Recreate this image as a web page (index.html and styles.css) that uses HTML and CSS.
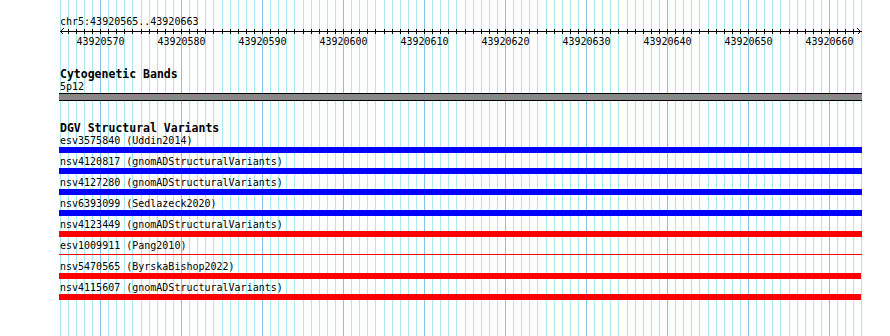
FILE: index.html
```html
<!DOCTYPE html>
<html lang="en">
<head>
    <meta charset="UTF-8">
    <title>chr5:43920565-43920663</title>
    <link rel="stylesheet" href="styles.css">
</head>
<body>
    <div class="browser">
        <!-- base guidelines, filled in by the script below -->
        <svg class="guides" id="guides" width="890" height="336"></svg>

        <div class="tracks">
            <div class="position">chr5:43920565..43920663</div>
            <svg class="ruler" id="ruler" width="890" height="20">
                <line class="axis" x1="59.5" y1="3.5" x2="861.5" y2="3.5" />
                <polyline class="arrow" points="63.5,0.5 60.5,3.5 63.5,6.5" />
                <polyline class="arrow" points="857.5,0.5 860.5,3.5 857.5,6.5" />
            </svg>

            <!-- Cytogenetic Bands -->
            <section class="track cyto">
                <div class="track-title">Cytogenetic Bands</div>
                <div class="item-label">5p12</div>
                <div class="band"></div>
            </section>

            <!-- DGV Structural Variants -->
            <section class="track dgv">
                <div class="track-title">DGV Structural Variants</div>
                <div class="variants">
                    <div class="variant">
                        <div class="item-label">esv3575840 (Uddin2014)</div>
                        <div class="bar gain"></div>
                    </div>
                    <div class="variant">
                        <div class="item-label">nsv4120817 (gnomADStructuralVariants)</div>
                        <div class="bar gain"></div>
                    </div>
                    <div class="variant">
                        <div class="item-label">nsv4127280 (gnomADStructuralVariants)</div>
                        <div class="bar gain"></div>
                    </div>
                    <div class="variant">
                        <div class="item-label">nsv6393099 (Sedlazeck2020)</div>
                        <div class="bar gain"></div>
                    </div>
                    <div class="variant">
                        <div class="item-label">nsv4123449 (gnomADStructuralVariants)</div>
                        <div class="bar loss"></div>
                    </div>
                    <div class="variant">
                        <div class="item-label">esv1009911 (Pang2010)</div>
                        <div class="bar loss thin"></div>
                    </div>
                    <div class="variant">
                        <div class="item-label">nsv5470565 (ByrskaBishop2022)</div>
                        <div class="bar loss short"></div>
                    </div>
                    <div class="variant">
                        <div class="item-label">nsv4115607 (gnomADStructuralVariants)</div>
                        <div class="bar loss short"></div>
                    </div>
                </div>
            </section>
        </div>
    </div>

    <script>
        const NS = 'http://www.w3.org/2000/svg';
        const guides = document.getElementById('guides');
        const ruler = document.getElementById('ruler');
        const start = 43920565;
        const bases = 99;
        const left = 60;
        const step = 8.1;

        function xAt(k) {
            return Math.floor(left + step * k) + 0.5;
        }

        function add(svg, tag, attrs, text) {
            const el = document.createElementNS(NS, tag);
            Object.entries(attrs).forEach(([key, value]) => el.setAttribute(key, value));
            if (text) el.textContent = text;
            svg.appendChild(el);
        }

        for (let k = 0; k <= bases; k++) {
            const x = xAt(k);
            const major = (start + k) % 10 === 0;
            // one guideline per base, darker every ten
            add(guides, 'line', { x1: x, y1: 0, x2: x, y2: 336, class: major ? 'major' : '' });
            if (k > 0 && k < bases) {
                add(ruler, 'line', { x1: x, y1: 1, x2: x, y2: 6, class: 'tick' });
            }
            if (major) {
                add(ruler, 'text', { x: x, y: 17, class: 'label' }, String(start + k));
            }
        }
    </script>
</body>
</html>
```

FILE: styles.css
```css
body {
    margin: 0;
    background-color: #fff;
}
.browser {
    display: grid;
    width: 890px;
    height: 336px;
    overflow: hidden;
}
.guides, .tracks {
    grid-area: 1 / 1;
}
.guides {
    display: block;
}
.guides line {
    stroke: #a8e8f0;
    stroke-width: 1;
    shape-rendering: crispEdges;
}
.guides line.major {
    stroke: #80c4e8;
}
.tracks {
    font-family: "DejaVu Sans Mono", "Liberation Mono", monospace;
    font-size: 10px;
    line-height: 12px;
    color: #000;
}
.position {
    padding: 16px 0 0 60px;
}
.ruler {
    display: block;
}
.ruler line, .ruler polyline {
    stroke: #000;
    stroke-width: 1;
    fill: none;
    shape-rendering: crispEdges;
}
.ruler .label {
    font-family: "DejaVu Sans Mono", "Liberation Mono", monospace;
    font-size: 10px;
    text-anchor: middle;
    fill: #000;
}
.track-title {
    padding-left: 60px;
    font-weight: bold;
    font-size: 11.5px;
    line-height: 13px;
}
.item-label {
    padding-left: 60px;
}
.cyto {
    margin-top: 20px;
}
.band {
    margin-left: 59px;
    width: 803px;
    height: 6px;
    background-color: #888;
    border-top: 1px solid #000;
    border-bottom: 1px solid #000;
}
.dgv {
    margin-top: 21px;
}
.variants {
    display: flex;
    flex-direction: column;
    gap: 3px;
}
.bar {
    margin-left: 59px;
    width: 803px;
    height: 6px;
}
.bar.gain {
    background-color: #0000ff;
}
.bar.loss {
    background-color: #ff0000;
}
.bar.thin {
    height: 1px;
    margin-top: 2px;
    margin-bottom: 3px;
}
.bar.short {
    width: 802px;
}
```
